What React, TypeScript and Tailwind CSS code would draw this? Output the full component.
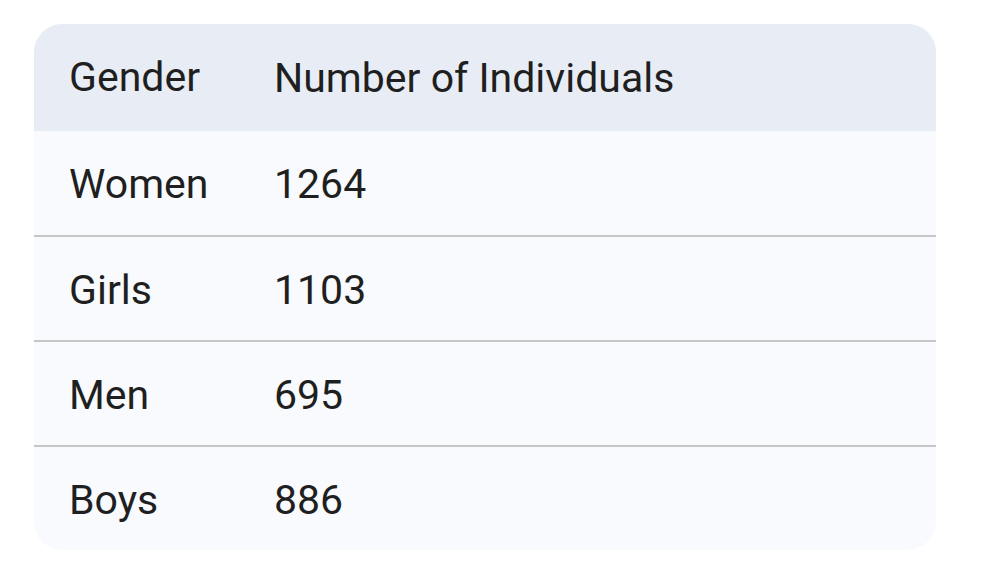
export default function App() {
  const rows = [
    ["Women", "1264"],
    ["Girls", "1103"],
    ["Men", "695"],
    ["Boys", "886"],
  ];
  return (
    <div className="w-[981px] h-[584px] bg-white pt-[24px] pl-[34px]" style={{ fontFamily: "Roboto, 'Open Sans', sans-serif" }}>
      <div className="w-[902px] rounded-[28px] overflow-hidden bg-[#f8fafd]">
        <table className="w-full border-collapse text-[#1f1f1f] text-[41px] text-left">
          <thead>
            <tr className="bg-[#e8edf5] h-[107px]">
              <th className="font-normal pl-[35px] pr-0 whitespace-nowrap w-[240px]">Gender</th>
              <th className="font-normal px-0 pt-[2px]">Number of Individuals</th>
            </tr>
          </thead>
          <tbody>
            {rows.map(([g, n], i) => (
              <tr key={g} className={i < rows.length - 1 ? "h-[105px] border-b-2 border-[#c4c7c5]" : "h-[104px]"}>
                <td className="pl-[35px] pt-[4px] whitespace-nowrap">{g}</td>
                <td className="pt-[4px]">{n}</td>
              </tr>
            ))}
          </tbody>
        </table>
      </div>
    </div>
  );
}
